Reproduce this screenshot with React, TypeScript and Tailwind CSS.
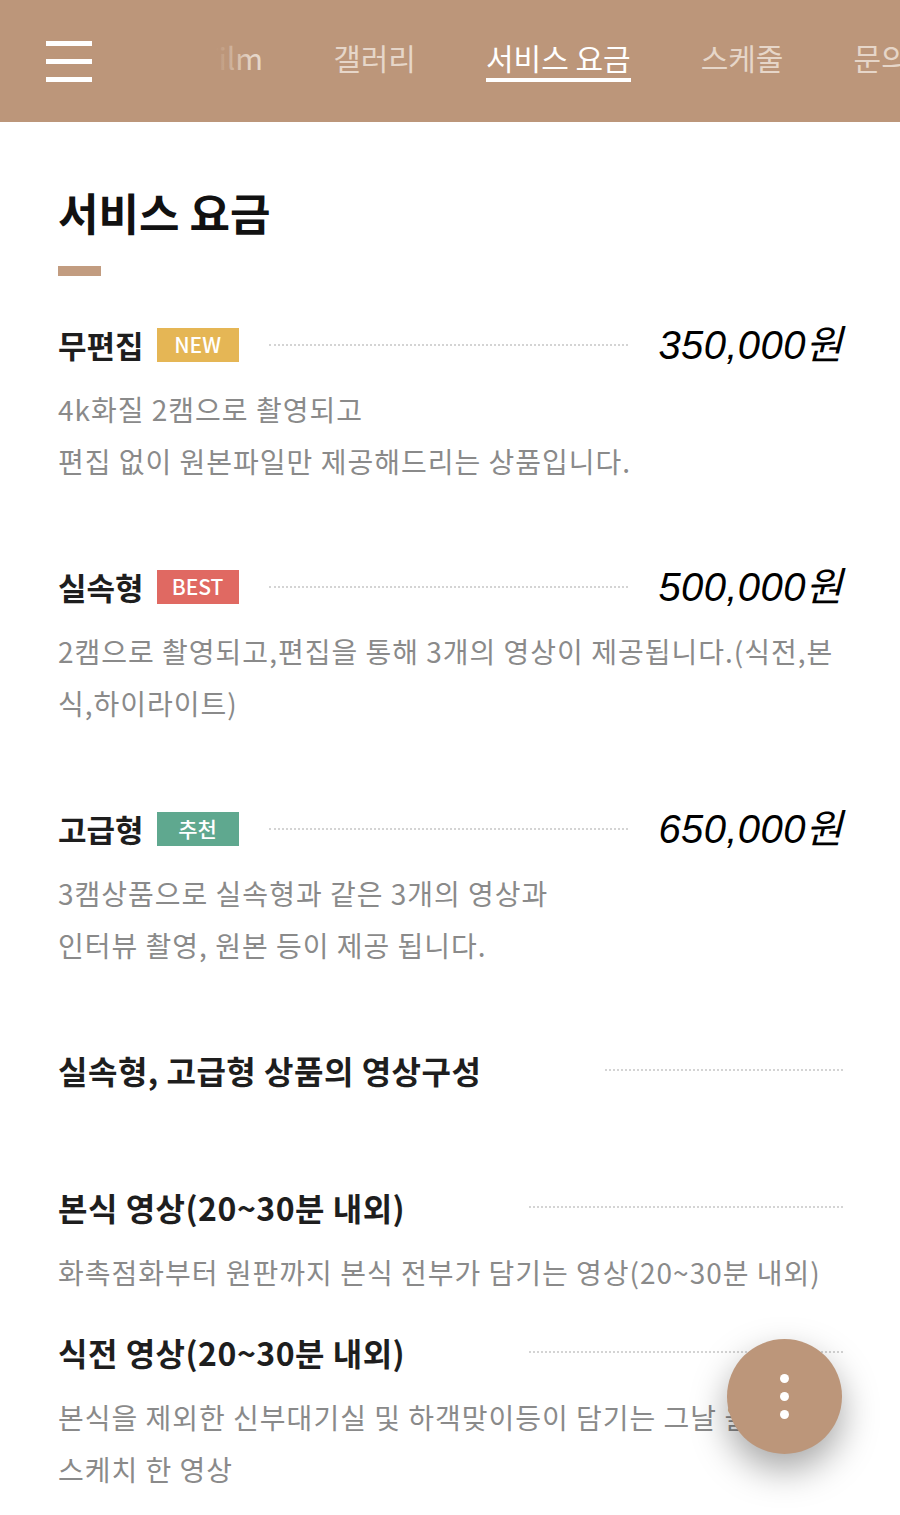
import React from 'react';

const KR = "font-['Noto_Sans_CJK_KR','Noto_Sans',sans-serif]";

const NAV_ITEMS = ['Film', '갤러리', '서비스 요금', '스케줄', '문의'];

interface PlanProps {
  title: string;
  badge: string;
  badgeClass: string;
  price: string;
  lines: React.ReactNode;
}

const Plan = ({ title, badge, badgeClass, price, lines }: PlanProps) => (
  <div>
    <div className="flex h-[50px] items-center">
      <h3 className="text-[31px] font-bold text-[#1e1e1e]">{title}</h3>
      <span
        className={`ml-[13px] flex h-[34px] w-[82px] items-center justify-center text-[21px] font-medium text-white ${badgeClass}`}
      >
        {badge}
      </span>
      <div className="mx-[30px] flex-1 border-t-2 border-dotted border-[#d4d4d4]" />
      <p className="font-['Liberation_Sans','Noto_Sans_CJK_KR',sans-serif] text-[40px] italic tracking-[0.4px] text-black">
        {price}
      </p>
    </div>
    <p className="mt-[13px] whitespace-nowrap text-[28px] leading-[52px] tracking-[1px] text-[#8a8a8a]">{lines}</p>
  </div>
);

interface VideoProps {
  title: string;
  lines: React.ReactNode;
  className?: string;
}

const VideoItem = ({ title, lines, className }: VideoProps) => (
  <div className={className}>
    <div className="flex h-[50px] items-center">
      <h4 className="text-[32px] font-bold tracking-[0.5px] text-[#1e1e1e]">{title}</h4>
      <div className="ml-[124px] flex-1 border-t-2 border-dotted border-[#d4d4d4]" />
    </div>
    <p className="mt-[14px] whitespace-nowrap text-[28px] leading-[52px] tracking-[1px] text-[#8a8a8a]">{lines}</p>
  </div>
);

export default function App() {
  return (
    <div className={`relative min-h-[1515px] w-[900px] overflow-hidden bg-white ${KR}`}>
      <header className="flex h-[122px] bg-[#bc967a]">
        <button type="button" aria-label="menu" className="ml-[46px] flex w-[46px] flex-col gap-[13px] self-center">
          <span className="h-[5px] w-full bg-white" />
          <span className="h-[5px] w-full bg-white" />
          <span className="h-[5px] w-full bg-white" />
        </button>

        <nav className="relative ml-[124px] flex-1 overflow-hidden">
          <ul className="-ml-[14px] flex items-start gap-[70px] whitespace-nowrap pt-[37px] text-[30px] leading-[40px]">
            {NAV_ITEMS.map((item) => {
              const active = item === '서비스 요금';
              return (
                <li key={item} className={`flex flex-col ${active ? 'text-white' : 'text-[#e6d6c9]'}`}>
                  {item}
                  <span className={`mt-[1px] h-[4px] w-full ${active ? 'bg-white' : 'bg-transparent'}`} />
                </li>
              );
            })}
          </ul>
          <div className="pointer-events-none absolute inset-y-0 left-0 w-[36px] bg-gradient-to-r from-[#bc967a] to-transparent" />
        </nav>
      </header>

      <main className="px-[57px] pb-[20px] pl-[58px] pt-[60px]">
        <h2 className="h-[60px] text-[44px] font-bold leading-[60px] text-[#111]">서비스 요금</h2>
        <div className="mt-[24px] h-[10px] w-[43px] bg-[#c29c80]" />

        <div className="mt-[44px] flex flex-col gap-[75px]">
          <Plan
            title="무편집"
            badge="NEW"
            badgeClass="bg-[#e5b655]"
            price="350,000원"
            lines={
              <>
                4k화질 2캠으로 촬영되고
                <br />
                편집 없이 원본파일만 제공해드리는 상품입니다.
              </>
            }
          />
          <Plan
            title="실속형"
            badge="BEST"
            badgeClass="bg-[#e06962]"
            price="500,000원"
            lines={
              <>
                2캠으로 촬영되고,편집을 통해 3개의 영상이 제공됩니다.(식전,본
                <br />
                식,하이라이트)
              </>
            }
          />
          <Plan
            title="고급형"
            badge="추천"
            badgeClass="bg-[#5fa88f]"
            price="650,000원"
            lines={
              <>
                3캠상품으로 실속형과 같은 3개의 영상과
                <br />
                인터뷰 촬영, 원본 등이 제공 됩니다.
              </>
            }
          />
        </div>

        <div className="mt-[74px] flex h-[50px] items-center">
          <h3 className="text-[32px] font-bold tracking-[0.5px] text-[#1e1e1e]">실속형, 고급형 상품의 영상구성</h3>
          <div className="ml-[124px] flex-1 border-t-2 border-dotted border-[#d4d4d4]" />
        </div>

        <VideoItem
          className="mt-[87px]"
          title="본식 영상(20~30분 내외)"
          lines="화촉점화부터 원판까지 본식 전부가 담기는 영상(20~30분 내외)"
        />
        <VideoItem
          className="mt-[29px]"
          title="식전 영상(20~30분 내외)"
          lines={
            <>
              본식을 제외한 신부대기실 및 하객맞이등이 담기는 그날 을
              <br />
              스케치 한 영상
            </>
          }
        />
      </main>

      <button
        type="button"
        aria-label="more"
        className="absolute left-[727px] top-[1339px] flex h-[115px] w-[115px] flex-col items-center justify-center gap-[9px] rounded-full bg-[#bc967a] shadow-[0_16px_36px_rgba(0,0,0,0.35)]"
      >
        <span className="h-[9px] w-[9px] rounded-full bg-white" />
        <span className="h-[9px] w-[9px] rounded-full bg-white" />
        <span className="h-[9px] w-[9px] rounded-full bg-white" />
      </button>
    </div>
  );
}
